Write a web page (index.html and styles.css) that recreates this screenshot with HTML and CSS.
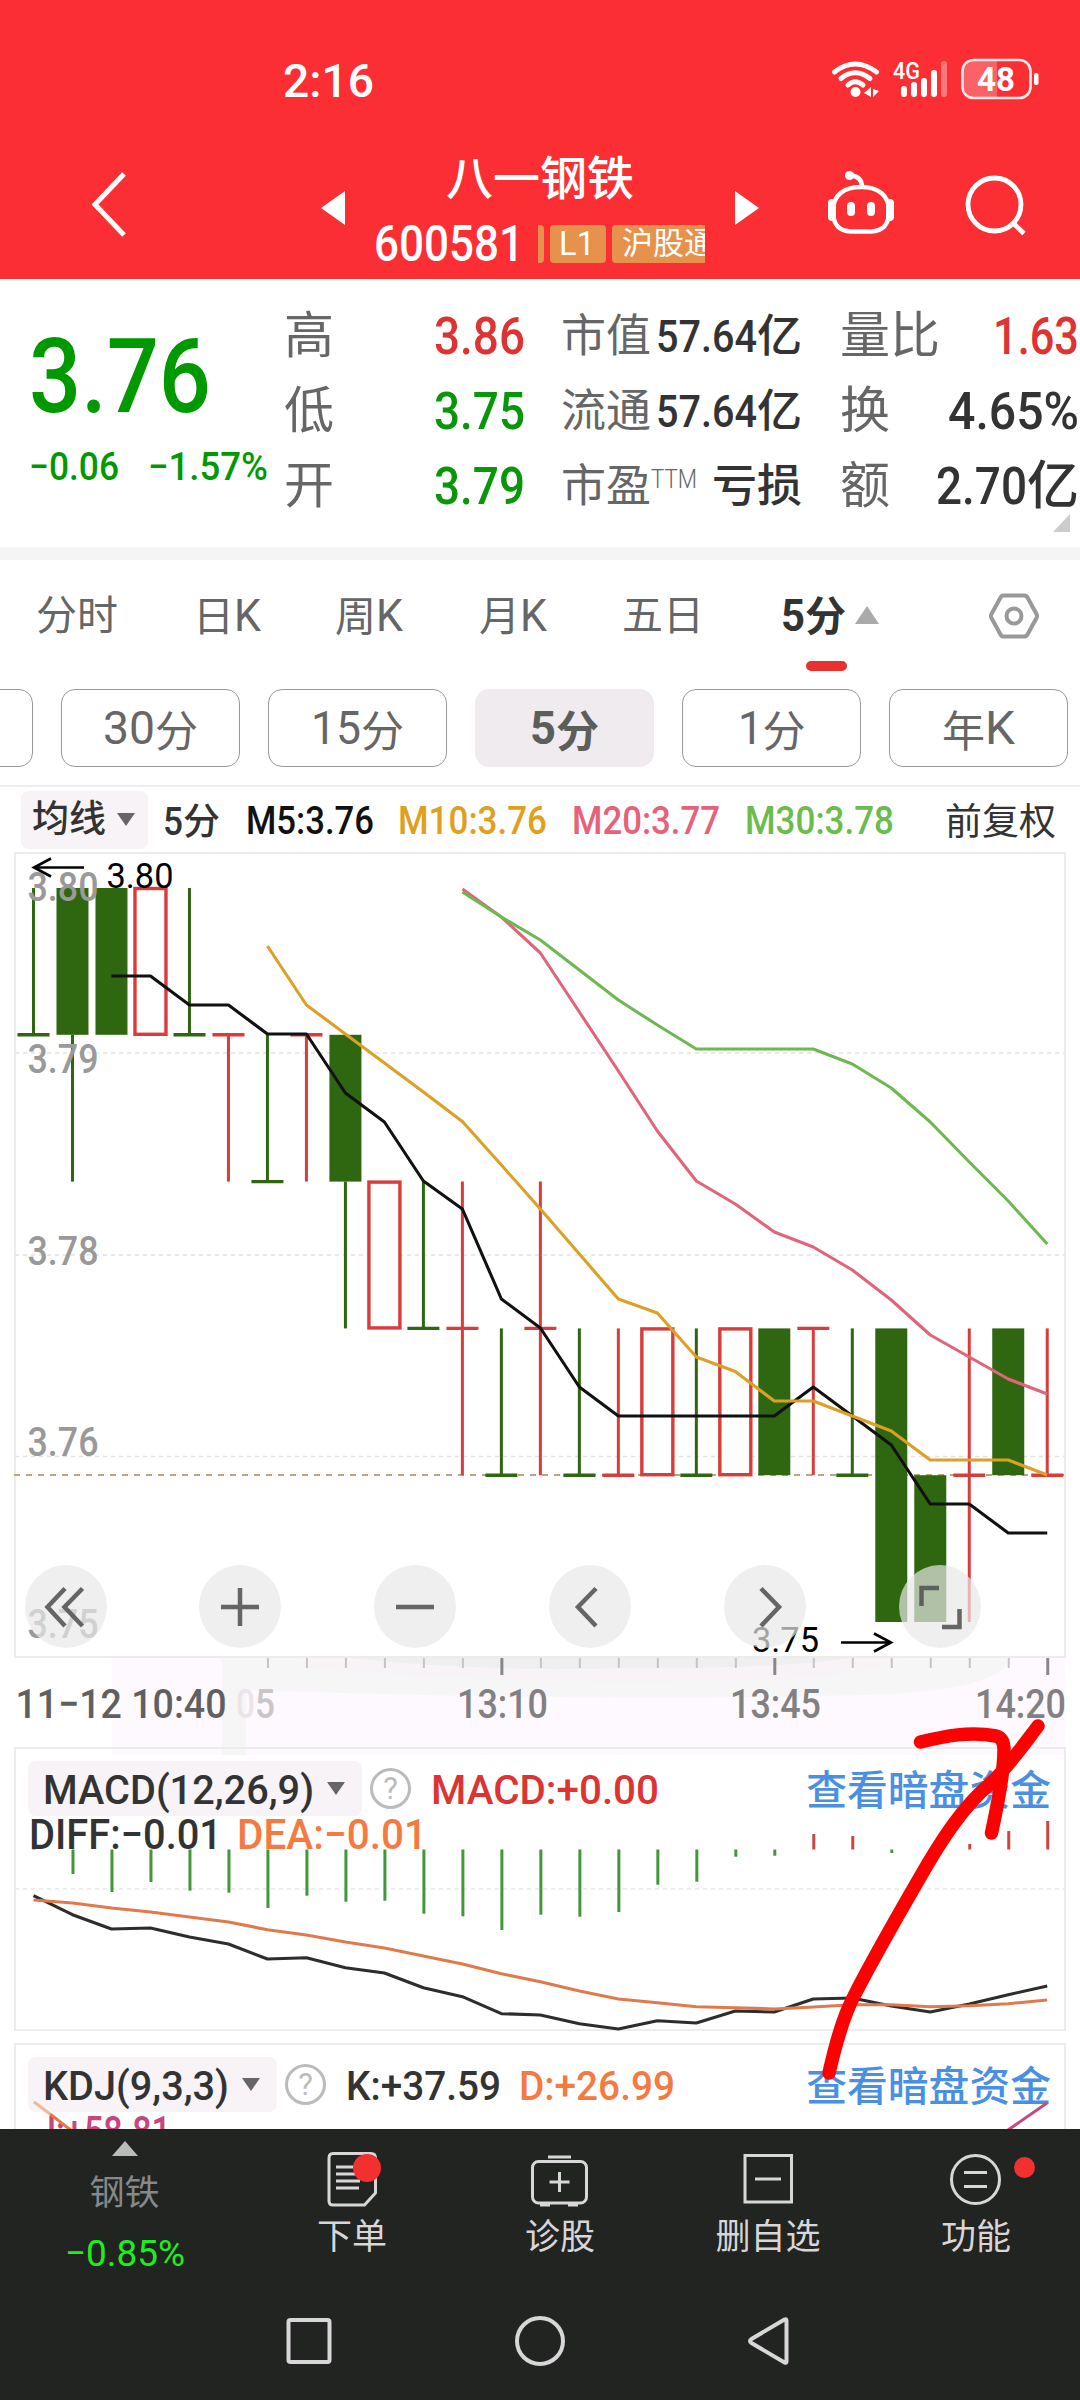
FILE: index.html
```
<!DOCTYPE html>
<html lang="zh-CN">
<head>
    <meta charset="UTF-8">
    <meta name="viewport" content="width=device-width, initial-scale=1.0">
    <title>八一钢铁 600581</title>
    <link rel="stylesheet" href="styles.css">
</head>
<body>
    <header class="topbar">
        <div class="status-bar">
            <span class="clock" data-w="91">2:16</span>
            <svg class="status-icons" width="220" height="50" viewBox="826 56 220 50">
                <g fill="none" stroke="#fff" stroke-width="5" stroke-linecap="round">
                    <path d="M834.500 72Q855 56 876.500 72"/>
                    <path d="M841 78.500Q855 67 870 78.500"/>
                    <path d="M848 85Q855 78.500 863 85"/>
                </g>
                <circle cx="855.500" cy="92" r="5" fill="#fff"/>
                <path d="M871 87v10l-7-4zM873 97v-8l6 2z" fill="#fff"/>
                <text class="svg-text" x="893" y="79" font-size="24" font-weight="500" fill="#fff" textLength="27" lengthAdjust="spacingAndGlyphs">4G</text>
                <g stroke="#fff" stroke-width="6" stroke-linecap="round">
                    <path d="M904 89v5M914 85v9M924 81v13M934 73v21"/>
                    <path d="M944 64v30" opacity=".35"/>
                </g>
                <path d="M975 61h22v36h-22a11 11 0 0 1-11-11v-14a11 11 0 0 1 11-11z" fill="#fff" opacity=".25"/>
                <rect x="962.500" y="60" width="68" height="38" rx="11" fill="none" stroke="#fff" stroke-opacity=".9" stroke-width="2.600"/>
                <rect x="1034" y="73" width="4.500" height="12" rx="2" fill="#fff"/>
                <text class="svg-text" x="977" y="91" font-size="34" font-weight="700" fill="#fff" textLength="38" lengthAdjust="spacingAndGlyphs">48</text>
            </svg>
        </div>
        <div class="title-bar">
            <svg class="back" width="40" height="70" viewBox="88 170 40 70"><path d="M124 174L95 204.500L124 235" fill="none" stroke="#fff" stroke-width="5"/></svg>
            <span class="prev"></span>
            <div class="stock">
                <div class="stock-name">八一钢铁</div>
                <div class="stock-code">
                    <span class="code" data-w="150">600581</span>
                    <div class="tags">
                        <span class="tag tag-cut"></span>
                        <span class="tag tag-l1"><b data-w="36">L1</b></span>
                        <span class="tag tag-hk">沪股通</span>
                    </div>
                </div>
            </div>
            <span class="next"></span>
            <svg class="robot" width="72" height="72" viewBox="825 172 72 72">
                <g fill="none" stroke="#fff" stroke-width="4.500">
                    <path d="M861 190c17 0 28 8 28 24c0 15-7 20-18 20.500h-20c-11-.5-18-5.500-18-20.500c0-16 11-24 28-24z"/>
                    <path d="M850 178.500Q862 179 862 190"/>
                </g>
                <path d="M832 206v14M890 206v14" stroke="#fff" stroke-width="8" stroke-linecap="round"/>
                <circle cx="849.500" cy="178.500" r="4.500" fill="#fff"/>
                <path d="M851 209v6M871 209v6" stroke="#fff" stroke-width="8" stroke-linecap="round"/>
            </svg>
            <svg class="search" width="64" height="64" viewBox="964 174 64 64">
                <circle cx="994.500" cy="205.500" r="26.500" fill="none" stroke="#fff" stroke-width="4.800"/>
                <path d="M1012 223L1024 234.500" stroke="#fff" stroke-width="4.800"/>
            </svg>
        </div>
    </header>

    <section class="quote">
        <div class="price-block">
            <div class="price" data-w="182">3.76</div>
            <div class="change"><span data-w="90">−0.06</span><span data-w="120">−1.57%</span></div>
        </div>
        <div class="cell"><span class="label">高</span><span class="val up" data-w="91">3.86</span></div>
        <div class="cell small"><span class="label">市值</span><span class="val"><i data-w="101">57.64</i>亿</span></div>
        <div class="cell"><span class="label">量比</span><span class="val up" data-w="86">1.63</span></div>
        <div class="cell"><span class="label">低</span><span class="val down" data-w="91">3.75</span></div>
        <div class="cell small"><span class="label">流通</span><span class="val"><i data-w="101">57.64</i>亿</span></div>
        <div class="cell"><span class="label">换</span><span class="val" data-w="131">4.65%</span></div>
        <div class="cell"><span class="label">开</span><span class="val down" data-w="91">3.79</span></div>
        <div class="cell small"><span class="label">市盈<sup data-w="46">TTM</sup></span><span class="val">亏损</span></div>
        <div class="cell"><span class="label">额</span><span class="val"><i data-w="91">2.70</i>亿</span></div>
        <span class="corner"></span>
    </section>

    <nav class="tabs">
        <span>分时</span>
        <span class="tab-day">日<i data-w="27">K</i></span>
        <span>周<i data-w="27">K</i></span>
        <span>月<i data-w="27">K</i></span>
        <span>五日</span>
        <span class="active"><i data-w="24">5</i>分<em class="caret-up"></em></span>
        <svg class="gear" width="52" height="50" viewBox="0 0 52 50">
            <path d="M15.500 4.500h21q2 0 3 2l9 16.500q1 2 0 4l-9 16.500q-1 2-3 2h-21q-2 0-3-2l-9-16.500q-1-2 0-4l9-16.500q1-2 3-2z" fill="none" stroke="#999" stroke-width="4"/>
            <circle cx="26" cy="25" r="7.500" fill="none" stroke="#999" stroke-width="4"/>
        </svg>
    </nav>

    <div class="periods">
        <span class="period"></span>
        <span class="period"><i data-w="52">30</i>分</span>
        <span class="period"><i data-w="50">15</i>分</span>
        <span class="period selected"><i data-w="26">5</i>分</span>
        <span class="period"><i data-w="25">1</i>分</span>
        <span class="period">年<i data-w="30">K</i></span>
    </div>

    <div class="ma-row">
        <span class="chip ma-chip">均线<em class="caret"></em></span>
        <span class="ma-period"><i data-w="20">5</i>分</span>
        <span class="m5"><i data-w="128">M5:3.76</i></span>
        <span class="m10"><i data-w="149">M10:3.76</i></span>
        <span class="m20"><i data-w="148">M20:3.77</i></span>
        <span class="m30"><i data-w="149">M30:3.78</i></span>
        <span class="adjust">前复权</span>
    </div>

    <main class="charts">
        <div class="panel panel-k">
            <svg id="kline" width="1080" height="894" viewBox="0 852 1080 894"></svg>
            <div class="tools">
                <button class="tool"><svg viewBox="-41 -41 82 82"><path d="M-1 -18.500L-18.500 0L-1 19M16.500 -18.500L-1.500 0L16.500 19"/></svg></button>
                <button class="tool"><svg viewBox="-41 -41 82 82"><path d="M-19 0H19M0 -19V19"/></svg></button>
                <button class="tool"><svg viewBox="-41 -41 82 82"><path d="M-19 0H19"/></svg></button>
                <button class="tool"><svg viewBox="-41 -41 82 82"><path d="M6 -18.500L-12 0L6 19"/></svg></button>
                <button class="tool"><svg viewBox="-41 -41 82 82"><path d="M-4 -18.500L14 0L-4 19"/></svg></button>
                <button class="tool"><svg viewBox="-41 -41 82 82"><path d="M-18.500 -1V-19H-1M19.500 2V20H2"/></svg></button>
            </div>
        </div>

        <div class="panel panel-macd">
            <svg id="macd" width="1080" height="290" viewBox="0 1746 1080 290"></svg>
            <div class="panel-head">
                <span class="chip macd-chip"><i data-w="271">MACD(12,26,9)</i><em class="caret"></em></span>
                <span class="help">?</span>
                <span class="macd-val"><i data-w="228">MACD:+0.00</i></span>
                <a class="dark-pool">查看暗盘资金</a>
            </div>
            <div class="panel-sub"><i data-w="193">DIFF:−0.01</i><i class="dea" data-w="190">DEA:−0.01</i></div>
        </div>

        <div class="panel panel-kdj">
            <svg id="kdj" width="1080" height="93" viewBox="0 2036 1080 93"></svg>
            <div class="panel-head">
                <span class="chip kdj-chip"><i data-w="186">KDJ(9,3,3)</i><em class="caret"></em></span>
                <span class="help">?</span>
                <span class="k-val"><i data-w="155">K:+37.59</i></span>
                <span class="d-val"><i data-w="156">D:+26.99</i></span>
                <a class="dark-pool">查看暗盘资金</a>
            </div>
            <div class="panel-sub j-val"><i data-w="134">J:+58.81</i></div>
            <svg class="kdj-lines" width="1080" height="93" viewBox="0 2036 1080 93">
                <path d="M34 2102L50 2114" stroke="#f0b79d" stroke-width="3"/>
                <path d="M50 2114L72 2131" stroke="#e07a4a" stroke-width="3"/>
                <path d="M1008 2130L1047 2103" stroke="#c34b82" stroke-width="3"/>
            </svg>
        </div>

        <!-- marker arrow drawn over the panels -->
        <svg class="marker" width="1080" height="1277" viewBox="0 852 1080 1277">
            <path d="M829 2073C835 2047 842 2019 854 1996C874 1957 897 1917 919 1879C940 1842 963 1806 991 1783C1007 1768 1025 1743 1038 1726"/>
            <path d="M920.500 1742C945 1736 970 1731 996 1736Q1004 1738 1004 1750Q1004 1776 991.500 1833"/>
        </svg>
    </main>

    <footer class="bottom">
        <div class="actions">
            <div class="action sector">
                <em class="caret-up"></em>
                <span class="sector-name">钢铁</span>
                <span class="sector-pct"><i data-w="120">−0.85%</i></span>
            </div>
            <div class="action">
                <svg width="70" height="64" viewBox="317 2148 70 64">
                    <path d="M333 2153.500h38q4.500 0 4.500 4.500v35l-11 12h-31.500q-4 0-4-4v-43q0-4.500 4-4.500z"/>
                    <path d="M336 2167h24M336 2174h24M336 2181h24M336 2188h23"/>
                    <circle cx="367" cy="2168" r="14" class="dot"/>
                </svg>
                <span>下单</span>
            </div>
            <div class="action">
                <svg width="70" height="64" viewBox="525 2148 70 64">
                    <rect x="532.500" y="2161.500" width="54" height="41.500" rx="6"/>
                    <path d="M548 2157h23M559.500 2172v20M549.500 2182h20M540 2205h10M568 2205h10"/>
                </svg>
                <span>诊股</span>
            </div>
            <div class="action">
                <svg width="70" height="64" viewBox="732 2148 70 64">
                    <path d="M744 2155.500h46.500v46.500h-46.500zM754 2179h26"/>
                </svg>
                <span>删自选</span>
            </div>
            <div class="action">
                <svg width="130" height="64" viewBox="911 2148 130 64">
                    <circle cx="975.500" cy="2179.500" r="24"/>
                    <path d="M964 2172.500h23M964 2186.500h23"/>
                    <circle cx="1024.500" cy="2167.500" r="10.500" class="dot"/>
                </svg>
                <span>功能</span>
            </div>
        </div>
        <svg class="sysnav" width="1080" height="70" viewBox="0 2306 1080 70">
            <rect x="288.500" y="2320" width="41" height="42" rx="2"/>
            <circle cx="540" cy="2341" r="23"/>
            <path d="M786.500 2320.500v41q0 2-2 1l-33-19.500q-3-2 0-4l33-19.500q2-1 2 1z"/>
        </svg>
    </footer>

    <script src="chart.js"></script>
</body>
</html>
```

FILE: styles.css
```
* { box-sizing: border-box; }

body {
    margin: 0;
    width: 1080px;
    height: 2400px;
    overflow: hidden;
    background: #fff;
    color: #333;
    font-family: Roboto, "Noto Sans CJK SC", sans-serif;
    font-weight: 500;
}

i, em { font-style: normal; }
svg { display: block; flex: none; }

[data-w] {
    display: inline-block;
    white-space: nowrap;
    transform-origin: left center;
}

.svg-text { font-family: Roboto, "Noto Sans CJK SC", sans-serif; }

/* header */
.topbar {
    height: 279px;
    background: #fa2e33;
    color: #fff;
}

.status-bar {
    display: flex;
    align-items: center;
    height: 140px;
    padding: 22px 34px 0 283px;
}

.clock { font-size: 47px; line-height: 60px; }
.status-icons { margin-left: auto; }

.title-bar {
    display: flex;
    align-items: center;
    height: 139px;
    padding: 0 52px 9px 88px;
}

.back { margin-right: 193px; }

.prev, .next {
    border: 17px solid transparent;
    margin-top: 5px;
}
.prev { border-left: 0; border-right: 24px solid #fff; }
.next { border-right: 0; border-left: 24px solid #fff; }

.stock { width: 390px; padding-top: 14px; }

.stock-name {
    font-size: 47px;
    line-height: 58px;
    text-align: center;
}

.stock-code {
    display: flex;
    align-items: center;
    height: 60px;
    margin: 6px 30px 0 29px;
}

.code { font-size: 50px; line-height: 60px; }

.tags {
    display: flex;
    gap: 6px;
    width: 167px;
    margin-left: auto;
    overflow: hidden;
}

.tag {
    flex: none;
    height: 38px;
    border-radius: 4px;
    background: #e6914c;
    font-size: 31px;
    font-weight: 400;
    line-height: 37px;
    white-space: nowrap;
}

.tag b { font-weight: 400; font-size: 33px; }
.tag-cut { width: 6px; border-radius: 0 4px 4px 0; }
.tag-l1 { width: 56px; padding-left: 9px; }
.tag-hk { width: 112px; padding-left: 10px; }

.robot { margin-left: 66px; }
.search { margin-left: 67px; }

/* quote */
.quote {
    position: relative;
    display: grid;
    grid-template-columns: 246px 241px 239px 239px;
    grid-template-rows: repeat(3, 75px);
    column-gap: 38px;
    height: 281px;
    padding-top: 20px;
    border-bottom: 13px solid #f5f5f5;
}

.price-block { grid-row: 1 / 4; padding: 26px 0 0 29px; color: #090; white-space: nowrap; }
.price { font-size: 104px; line-height: 104px; }
.change { display: flex; gap: 29px; margin-top: 18px; font-size: 39px; line-height: 40px; }

.cell {
    display: flex;
    align-items: center;
    justify-content: space-between;
    line-height: 75px;
    font-size: 52px;
    white-space: nowrap;
}

.label { color: #666; font-weight: 400; font-size: 50px; }
.small, .small .label { font-size: 45px; }
.small .label { margin-left: -2px; }
.label sup { font-size: 25px; line-height: 0; font-weight: 300; vertical-align: 14px; }
.up { color: #dd3333; }
.down { color: #0a960a; }

.corner {
    position: absolute;
    right: 10px;
    bottom: 15px;
    border-bottom: 18px solid #ccc;
    border-left: 17px solid transparent;
}

/* tabs */
.tabs {
    display: grid;
    grid-template-columns: 161px 138px 144px 143px 159px 207px auto;
    align-items: center;
    height: 112px;
    padding-left: 36px;
    color: #666;
    font-size: 41px;
    font-weight: 400;
    line-height: 60px;
    white-space: nowrap;
}

.tabs i { font-size: 44px; }
.tabs .tab-day { margin-left: -4px; }

.tabs .active {
    position: relative;
    color: #333;
    font-weight: 700;
}

.tabs .active::after {
    content: "";
    position: absolute;
    left: 25px;
    top: 75px;
    width: 41px;
    height: 10px;
    border-radius: 5px;
    background: #eb3030;
}

.caret-up {
    display: inline-block;
    border: 12px solid transparent;
    border-top: 0;
    border-bottom: 18px solid #aaa;
}

.tabs .caret-up { margin-left: 9px; vertical-align: 7px; }

.periods {
    display: flex;
    gap: 28px;
    margin: 17px 0 0 -146px;
    padding-bottom: 18px;
}

.period {
    display: flex;
    flex: none;
    align-items: center;
    justify-content: center;
    width: 179px;
    height: 78px;
    border: 1.500px solid #999;
    border-radius: 14px;
    color: #666;
    font-size: 43px;
    font-weight: 400;
}

.period i { font-size: 46px; }

.selected {
    border-color: #efebef;
    background: #efebef;
    font-weight: 700;
    color: #5c5e5c;
}

.ma-row {
    display: flex;
    align-items: center;
    height: 67px;
    padding-left: 21px;
    border-top: 2px solid #ededed;
    font-size: 37px;
    white-space: nowrap;
}

.ma-row i { font-size: 38px; }

.chip {
    display: flex;
    align-items: center;
    flex: none;
    border-radius: 8px;
    background: #f7f3f7;
}

.caret {
    border: 9.500px solid transparent;
    border-bottom: 0;
    border-top: 13px solid #666;
}

.ma-chip { width: 127px; height: 58px; padding-left: 11px; line-height: 56px; }
.ma-chip .caret { margin-left: 11px; }
.ma-period { width: 83px; margin: -1px 0 0 15px; }
.m5 { width: 152px; color: #111; }
.m10 { width: 174px; color: #e0a01c; }
.m20 { width: 173px; color: #e5627a; }
.m30 { width: 200px; color: #6bbb4d; }
.m5, .m10, .m20, .m30 { margin-top: 2px; }
.adjust { font-weight: 400; margin-top: -2px; }

/* charts */
.charts {
    position: relative;
    height: 1277px;
    overflow: hidden;
}

.panel { position: relative; }

.tools {
    position: absolute;
    left: 24.500px;
    top: 713px;
    display: flex;
    gap: 92.900px;
}

.tool {
    width: 82px;
    height: 83px;
    padding: 0;
    border: 0;
    border-radius: 50%;
    background: rgba(232, 232, 232, .7);
}

.tool svg { fill: none; stroke: #555; stroke-opacity: .9; stroke-width: 4.500; }

.panel-head {
    position: absolute;
    left: 28px;
    top: 15px;
    right: 29px;
    display: flex;
    align-items: center;
    height: 55px;
    font-size: 41.500px;
    white-space: nowrap;
}

.panel-kdj .panel-head { top: 21px; }
.chip i { margin-left: 15px; }
.macd-chip, .kdj-chip { height: 55px; padding-top: 2px; }
.macd-chip { width: 334px; }
.kdj-chip { width: 249px; }
.macd-chip .caret, .kdj-chip .caret { margin: -3px 0 0 13px; border-left-width: 9px; border-right-width: 9px; }

.help {
    width: 41px;
    height: 41px;
    margin-left: 8px;
    border: 3px solid #bbb;
    border-radius: 50%;
    color: #bbb;
    font-size: 31px;
    font-weight: 400;
    line-height: 35px;
    text-align: center;
}

.macd-val { margin: 2px 0 0 20px; color: #dd3333; }
.k-val { margin: 2px 0 0 20px; }
.d-val { margin: 2px 0 0 18px; color: #f47a42; }
.dark-pool { margin: -3px 0 0 auto; color: #4a90e2; font-size: 40.800px; }

.panel-sub {
    position: absolute;
    left: 29px;
    top: 69px;
    display: flex;
    gap: 15px;
    font-size: 42px;
    line-height: 40px;
}

.dea { color: #f47a42; }
.j-val { left: 37px; top: 76px; color: #c9457f; }
.kdj-lines { position: absolute; left: 0; top: 0; }

.marker {
    position: absolute;
    left: 0;
    top: 0;
    fill: none;
    stroke: #f00;
    stroke-width: 13.500;
    stroke-linecap: round;
    stroke-linejoin: round;
}

/* bottom bar */
.bottom {
    height: 271px;
    background: #212421;
    color: #d8d6d8;
}

.actions {
    display: flex;
    height: 177px;
    padding-left: 17px;
}

.action {
    display: flex;
    flex-direction: column;
    align-items: center;
    width: 208px;
    padding-top: 19px;
    font-size: 35px;
    font-weight: 400;
    line-height: 52px;
}

.action svg {
    fill: none;
    stroke: #d8d6d8;
    stroke-width: 3;
}

.action svg .dot { fill: #f23030; stroke: none; }
.sector { width: 215px; padding-top: 12px; margin-right: 16px; }
.sector .caret-up { border-bottom: 15px solid #bbb; border-left-width: 13px; border-right-width: 13px; }
.sector-name { margin-top: 12px; color: #85898c; }
.sector-pct { margin-top: 8px; color: #1cf01c; font-size: 37px; }

.sysnav { fill: none; stroke: #d8d6d8; stroke-width: 4; }
```

FILE: chart.js
```
const NS = 'http://www.w3.org/2000/svg';
const RED = '#d93c3a';
const GREEN = '#2f6610';

const xAt = i => 33.5 + i * 38.99;
const level = n => 888 + n * 146.8;

function add(svg, tag, attrs, text) {
    const el = document.createElementNS(NS, tag);
    for (const key in attrs) el.setAttribute(key, attrs[key]);
    if (text) el.textContent = text;
    svg.appendChild(el);
}

function line(svg, x1, y1, x2, y2, stroke, width, extra) {
    add(svg, 'line', Object.assign({ x1, y1, x2, y2, stroke, 'stroke-width': width }, extra));
}

function series(svg, start, values, stroke) {
    const points = values.map((y, i) => xAt(start + i) + ',' + y).join(' ');
    add(svg, 'polyline', { points, stroke, fill: 'none', 'stroke-width': 3.1, 'stroke-linejoin': 'round' });
}

function label(svg, x, y, size, width, fill, text, weight) {
    add(svg, 'text', {
        x, y, fill, class: 'svg-text', 'font-size': size, 'font-weight': weight || 500,
        textLength: width, lengthAdjust: 'spacingAndGlyphs'
    }, text);
}

// [color, open level, close level, high level, low level]
const candles = [
    ['g', 1, 1, 0, 1], ['g', 0, 1, 0, 2], ['g', 0, 1, 0, 1], ['r', 0, 1, 0, 1], ['g', 1, 1, 0, 1],
    ['r', 1, 1, 1, 2], ['g', 2, 2, 1, 2], ['r', 1, 1, 1, 2], ['g', 1, 2, 1, 3], ['r', 2, 3, 2, 3],
    ['g', 3, 3, 2, 3], ['r', 3, 3, 2, 4], ['g', 4, 4, 3, 4], ['r', 3, 3, 2, 4], ['g', 4, 4, 3, 4],
    ['r', 4, 4, 3, 4], ['r', 3, 4, 3, 4], ['g', 4, 4, 3, 4], ['r', 3, 4, 3, 4], ['g', 3, 4, 3, 4],
    ['r', 3, 3, 3, 4], ['g', 4, 4, 3, 4], ['g', 3, 5, 3, 5], ['g', 4, 5, 4, 5], ['r', 4, 4, 3, 5],
    ['g', 3, 4, 3, 4], ['r', 4, 4, 3, 4]
];

function drawKline() {
    const svg = document.getElementById('kline');

    // axis background
    add(svg, 'path', { d: 'M112 1658H1065V1746H112Z', fill: '#fdf9fe' });
    add(svg, 'path', { d: 'M222 1658H1010Q1000 1692 860 1695Q600 1702 246 1690V1746H222Z', fill: '#f6f6f6' });
    add(svg, 'path', { d: 'M296 1658H900Q860 1680 700 1681Q560 1686 310 1668Z', fill: '#f7f3f6' });
    add(svg, 'path', { d: 'M350 1658H850Q780 1669 620 1668Q480 1672 350 1658Z', fill: '#eeefee' });

    add(svg, 'rect', { x: 15, y: 853, width: 1050, height: 804, fill: 'none', stroke: '#ececec', 'stroke-width': 2 });
    [1053, 1255, 1456.500].forEach(y => line(svg, 15, y, 1065, y, '#e2e2e2', 1.5, { 'stroke-dasharray': '4 4' }));
    line(svg, 14, 1475, 1065, 1475, '#bfa678', 2, { 'stroke-dasharray': '6 6' });

    candles.forEach(([color, open, close, high, low], i) => {
        const x = xAt(i);
        const stroke = color === 'g' ? GREEN : RED;
        if (open === close) {
            line(svg, x, level(high), x, level(low), stroke, 3);
            line(svg, x - 16, level(open), x + 16, level(open), stroke, 3.4);
        } else if (color === 'g') {
            add(svg, 'rect', { x: x - 16, y: level(open), width: 32, height: level(close) - level(open), fill: GREEN });
            if (low > close) line(svg, x, level(close), x, level(low), stroke, 3);
        } else {
            add(svg, 'rect', { x: x - 15.5, y: level(open) + .5, width: 31, height: level(close) - level(open) - 1, fill: '#fff', stroke, 'stroke-width': 3.4 });
        }
    });

    [['3.80', 901], ['3.79', 1073], ['3.78', 1264.5], ['3.76', 1455.5], ['3.75', 1637.5]]
        .forEach(([text, y]) => label(svg, 27.5, y, 41, 71, '#999', text));

    series(svg, 11, [889, 917, 953, 1012, 1071, 1131, 1181, 1204, 1232, 1247, 1270, 1300, 1335, 1357, 1379, 1394], '#e0657a');
    series(svg, 11, [892, 917, 940, 970, 1000, 1025, 1049, 1049, 1049, 1049, 1064, 1088, 1122, 1162, 1201, 1244], '#6fb84f');
    series(svg, 2, [976, 976, 1005, 1005, 1034, 1034, 1093, 1122, 1181, 1209, 1299, 1328, 1387, 1416, 1416, 1416, 1416, 1416, 1387, 1416, 1445, 1504, 1504, 1533, 1533], '#111');
    series(svg, 6, [946, 1005, 1034, 1063, 1092, 1121.5, 1165, 1209, 1254, 1299, 1313, 1357, 1371.5, 1401, 1401, 1416, 1431, 1460, 1460, 1460, 1475], '#dba024');

    // high and low markers
    add(svg, 'path', { d: 'M84 867.5H34M51 858.5L34 867.5L51 876.5M841 1642.5H891M874 1633.5L891 1642.5L874 1651.5', fill: 'none', stroke: '#000', 'stroke-width': 2.6 });
    label(svg, 106.5, 888, 35.5, 67, '#000', '3.80', 400);
    label(svg, 752, 1652, 35.5, 67, '#000', '3.75', 400);

    for (let i = 6; i < 27; i++) {
        const major = (i - 12) % 7 === 0 && i > 6;
        line(svg, xAt(i) + .5, 1658, xAt(i) + .5, major ? 1675 : 1668, major ? '#888' : '#c4c4c4', major ? 3 : 2);
    }
    label(svg, 15.5, 1718, 41, 211, '#606060', '11−12 10:40');
    label(svg, 236, 1718, 41, 19, '#e9e5e9', '0');
    label(svg, 255, 1718, 41, 20, '#c8c6c8', '5');
    label(svg, 457, 1718, 41, 91, '#828082', '13:10');
    label(svg, 730, 1718, 41, 91, '#828082', '13:45');
    label(svg, 975, 1718, 41, 91, '#828082', '14:20');
}

function drawMacd() {
    const svg = document.getElementById('macd');
    const zero = 1849.5;
    const bars = [1849, 1874, 1892, 1882, 1890.7, 1892.7, 1908, 1895.7, 1901.7, 1900.7, 1913.7, 1916.3, 1930, 1914.7,
        1916.7, 1912, 1884.7, 1881.7, 1856.7, 1855.7, 1834, 1836, 1853, 1851, 1844, 1831, 1821];

    add(svg, 'rect', { x: 112, y: 1746, width: 953, height: 9, fill: '#fdf9fe' });
    add(svg, 'rect', { x: 222, y: 1746, width: 24, height: 9, fill: '#f6f6f6' });
    add(svg, 'rect', { x: 15, y: 1748, width: 1050, height: 282, fill: 'none', stroke: '#ececec', 'stroke-width': 2 });
    line(svg, 15, 1889, 1065, 1889, '#e8e8e8', 1.5, { 'stroke-dasharray': '4 4' });
    bars.forEach((y, i) => line(svg, xAt(i) + .5, zero, xAt(i) + .5, y, y < zero ? '#cc4444' : '#43963a', 3));
    series(svg, 0, [1895.7, 1914.7, 1929, 1928, 1937, 1944, 1959, 1957.7, 1967.7, 1973, 1987.7, 1996.7, 2013.7, 2015, 2023.7,
        2029, 2020.7, 2023, 2011, 2012, 1999, 1998, 2006, 2012, 2004, 1994.7, 1986], '#2d2d2d');
    series(svg, 0, [1900, 1903, 1908, 1912, 1917, 1922, 1929.7, 1935, 1942, 1948, 1956, 1964, 1973.7, 1981.7, 1991, 1999,
        2002.7, 2006.7, 2007.7, 2009, 2007, 2004.7, 2004.7, 2006.7, 2005.7, 2003.7, 2000], '#e07a4c');
}

function drawKdj() {
    const svg = document.getElementById('kdj');
    add(svg, 'path', { d: 'M15 2140V2044H1065V2140', fill: 'none', stroke: '#ececec', 'stroke-width': 2 });
}

function fitText() {
    document.querySelectorAll('[data-w]').forEach(el => {
        const target = Number(el.dataset.w);
        el.style.width = 'max-content';
        const natural = el.getBoundingClientRect().width;
        el.style.transform = `scaleX(${target / natural})`;
        el.style.marginRight = `${target - natural}px`;
    });
}

drawKline();
drawMacd();
drawKdj();
fitText();
```
